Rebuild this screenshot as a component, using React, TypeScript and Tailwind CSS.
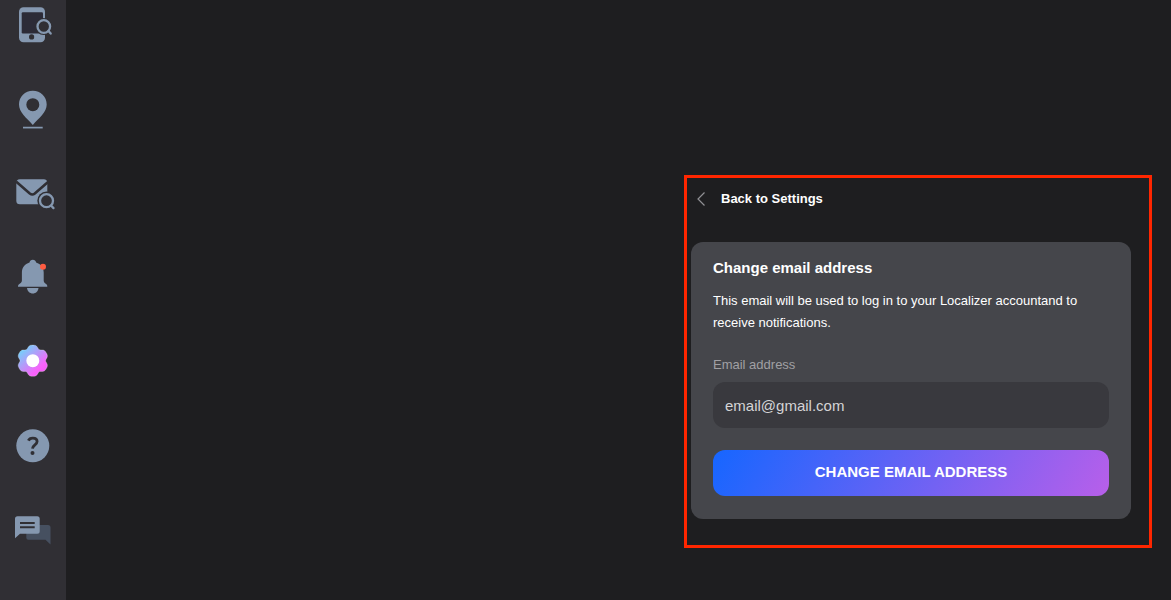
import { useState } from 'react';
import type { FormEvent, ReactNode } from 'react';

interface NavItem {
  id: string;
  label: string;
  icon: ReactNode;
}

// six blunt lobes around the centre, one of them pointing up
const gearPoints = Array.from({ length: 120 }, (_, i) => {
  const angle = (i / 120) * Math.PI * 2;
  const radius = 14.6 + 1.4 * Math.cos(6 * angle) - 0.4 * Math.cos(12 * angle);
  const x = 19.8 + radius * Math.sin(angle);
  const y = 19.7 - radius * Math.cos(angle);
  return `${x.toFixed(2)},${y.toFixed(2)}`;
}).join(' ');

const navItems: NavItem[] = [
  {
    id: 'phone',
    label: 'Phone lookup',
    icon: (
      <>
        <rect x="6" y="3.2" width="26" height="35" rx="4.5" fill="#8598b0" />
        <rect x="8.7" y="8.2" width="21.3" height="21.3" rx="1.2" fill="#2c2b37" />
        <circle cx="18.6" cy="32.9" r="2.6" fill="#302f34" />
        <circle cx="30.8" cy="22.5" r="8.6" fill="#302f34" />
        <circle cx="30.8" cy="22.5" r="6.3" fill="none" stroke="#8598b0" strokeWidth="2.3" />
        <path d="M35.5 27l2.2 2.6" stroke="#8598b0" strokeWidth="2.3" strokeLinecap="round" />
      </>
    ),
  },
  {
    id: 'location',
    label: 'Location',
    icon: (
      <>
        <path
          d="M19.8 2.8C12 2.8 6 8.9 6 16.5c0 7.6 7.5 13.5 13.8 20.4C26.1 30 33.7 24.1 33.7 16.5c0-7.6-6.1-13.7-13.9-13.7z"
          fill="#8598b0"
        />
        <circle cx="19.8" cy="16.7" r="6.5" fill="#302f34" />
        <path d="M10 39.6h19.7" stroke="#8598b0" strokeWidth="1.7" />
      </>
    ),
  },
  {
    id: 'mail',
    label: 'Mail lookup',
    icon: (
      <>
        <rect x="3.3" y="6.3" width="31" height="25" rx="3.5" fill="#8598b0" />
        <path
          d="M3 8.5l13.8 12q2.5 2 5 0l13.8-12"
          fill="none"
          stroke="#302f34"
          strokeWidth="2.6"
        />
        <circle cx="33.5" cy="27.7" r="9.2" fill="#302f34" />
        <circle cx="33.5" cy="27.7" r="6.5" fill="none" stroke="#8598b0" strokeWidth="2.3" />
        <path d="M38.2 32.7l2.3 2.4" stroke="#8598b0" strokeWidth="2.3" strokeLinecap="round" />
      </>
    ),
  },
  {
    id: 'notifications',
    label: 'Notifications',
    icon: (
      <>
        <path
          d="M19.8 2.7c1.8 0 2.9 1.1 3.3 2.7 4.7 1.4 7.6 5.1 7.6 10v8.2c0 2 1.3 2.8 2.7 3.7.7.5.9 1.2.9 2.4H5c0-1.2.3-1.9 1-2.4 1.4-.9 2.9-1.7 2.9-3.7v-8.2c0-4.900 2.900-8.600 7.600-10 .4-1.600 1.500-2.700 3.300-2.700z"
          fill="#8598b0"
        />
        <path d="M14 31h11.5c-.4 3.4-2.7 5.5-5.7 5.5S14.4 34.4 14 31z" fill="#8598b0" />
        <circle cx="30" cy="9.7" r="3" fill="#ff5c41" />
      </>
    ),
  },
  {
    id: 'settings',
    label: 'Settings',
    icon: (
      <>
        <defs>
          <linearGradient id="gear" x1="7" y1="9" x2="29" y2="33" gradientUnits="userSpaceOnUse">
            <stop offset="0" stopColor="#70d3fb" />
            <stop offset="0.5" stopColor="#c091f8" />
            <stop offset="0.8" stopColor="#f863fb" />
            <stop offset="1" stopColor="#f45cf6" />
          </linearGradient>
        </defs>
        <polygon
          points={gearPoints}
          fill="url(#gear)"
          stroke="#ffffff"
          strokeOpacity="0.35"
          strokeWidth="0.7"
        />
        <circle cx="19.8" cy="19.7" r="6.5" fill="#ffffff" />
      </>
    ),
  },
  {
    id: 'help',
    label: 'Help',
    icon: (
      <>
        <circle cx="19.8" cy="19.8" r="16.5" fill="#8598b0" />
        <path
          d="M15.4 14.6c.7-1.7 2.3-2.5 4.4-2.5 2.7 0 4.300 1.300 4.300 3.500 0 3.200-4.500 3.400-4.600 7"
          fill="none"
          stroke="#302f34"
          strokeWidth="2.8"
        />
        <circle cx="19.5" cy="27" r="2" fill="#302f34" />
      </>
    ),
  },
  {
    id: 'chat',
    label: 'Chat',
    icon: (
      <>
        <path
          d="M15.3 15h19.7a2.5 2.5 0 0 1 2.5 2.5v17l-5-4.8H15.300a2 2 0 0 1-2-2V17a2 2 0 0 1 2-2z"
          fill="#465060"
        />
        <path
          d="M4.5 6.3h19.7a2.5 2.5 0 0 1 2.5 2.5v12.5a2.5 2.5 0 0 1-2.5 2.5H7l-5 4.5V8.8a2.5 2.5 0 0 1 2.5-2.5z"
          fill="#8598b0"
        />
        <path d="M7 13h14.7M7 17.3h14.7" stroke="#302f34" strokeWidth="1.9" />
      </>
    ),
  },
];

function Sidebar() {
  const [active, setActive] = useState('settings');

  return (
    <nav className="flex w-[66px] shrink-0 flex-col items-center justify-between bg-[#302f34] pt-1 pb-[50px]">
      {navItems.map((item) => (
        <button
          key={item.id}
          type="button"
          aria-label={item.label}
          aria-current={active === item.id ? 'page' : undefined}
          onClick={() => setActive(item.id)}
          className="size-10 cursor-pointer"
        >
          <svg viewBox="0 0 40 40" className="size-10 overflow-visible" aria-hidden="true">
            {item.icon}
          </svg>
        </button>
      ))}
    </nav>
  );
}

function ChangeEmailCard() {
  const [email, setEmail] = useState('email@gmail.com');

  const handleSubmit = (e: FormEvent) => {
    e.preventDefault();
  };

  return (
    <form onSubmit={handleSubmit} className="flex flex-col rounded-xl bg-[#45464b] px-[22px] pt-[15px] pb-[23px]">
      <h1 className="text-[15px] leading-[22px] font-bold text-white">Change email address</h1>
      <p className="mt-[11px] text-[13px] leading-[22px] text-white">
        This email will be used to log in to your Localizer accountand to receive notifications.
      </p>
      <label htmlFor="email" className="mt-[21px] text-[13px] leading-5 text-[#a0a0a4]">
        Email address
      </label>
      <input
        id="email"
        type="email"
        value={email}
        onChange={(e) => setEmail(e.target.value)}
        className="mt-[7px] h-[46px] w-full rounded-xl bg-[#39393e] px-3 text-[15px] text-[#d4d4d6] outline-none"
      />
      <button
        type="submit"
        className="mt-[22px] h-[46px] w-full cursor-pointer rounded-xl bg-[linear-gradient(120deg,#1666ff_0%,#b85fea_100%)] pb-0.5 text-[15px] font-bold text-white"
      >
        CHANGE EMAIL ADDRESS
      </button>
    </form>
  );
}

export default function App() {
  return (
    <div className="flex min-h-screen bg-[#1e1e20] font-['Liberation_Sans',Arial,sans-serif]">
      <Sidebar />
      <main className="flex flex-1 items-end justify-end pr-[19px] pb-[52px]">
        <section className="w-full max-w-[468px] border-3 border-[#ff2600] pr-[18px] pb-[26px] pl-1">
          <a
            href="#settings"
            className="mb-[22px] flex h-[42px] w-fit items-center gap-4 pl-1.5 text-[13px] font-bold text-white"
          >
            <svg
              viewBox="0 0 8 14"
              className="h-[14px] w-2"
              fill="none"
              stroke="#909094"
              strokeWidth="1.2"
              aria-hidden="true"
            >
              <path d="M7.5 0.5L1 7l6.5 6.5" />
            </svg>
            Back to Settings
          </a>
          <ChangeEmailCard />
        </section>
      </main>
    </div>
  );
}
